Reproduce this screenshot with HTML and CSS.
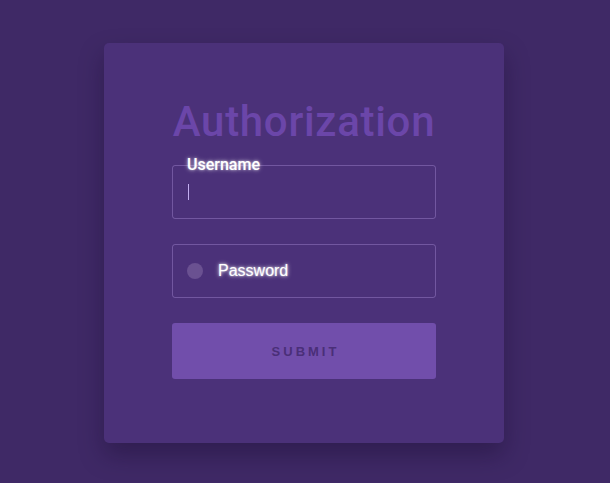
FILE: index.html
```html
<!DOCTYPE html>
<html lang="en">
<head>
<meta charset="utf-8">
<title>Authorization</title>
<link rel="stylesheet" href="styles.css">
</head>
<body>
<main class="card">
  <h1 class="title">Authorization</h1>
  <div class="field">
    <span class="label">Username</span>
    <span class="caret"></span>
  </div>
  <div class="field field-password">
    <span class="dot"></span>
    <span class="placeholder">Password</span>
  </div>
  <button class="submit" type="button">Submit</button>
</main>
</body>
</html>
```
FILE: styles.css
```css
html, body {
  margin: 0;
  padding: 0;
  height: 100%;
}
body {
  background: #3f2966;
  font-family: Roboto, "Liberation Sans", sans-serif;
  display: flex;
  justify-content: center;
  align-items: flex-start;
}
.card {
  margin-top: 43px;
  margin-right: 2px;
  width: 400px;
  height: 400px;
  box-sizing: border-box;
  background: #4b3179;
  border-radius: 5px;
  box-shadow: 0 12px 24px rgba(20, 8, 40, 0.35);
  padding: 58px 68px 0;
  display: flex;
  flex-direction: column;
}
.title {
  margin: 0 0 22px;
  font-size: 42px;
  line-height: 42px;
  font-weight: 500;
  letter-spacing: 0.7px;
  color: #6b46a9;
  text-align: center;
}
.field {
  position: relative;
  height: 54px;
  box-sizing: border-box;
  border: 1px solid rgba(190, 160, 235, 0.35);
  border-radius: 3px;
  margin-bottom: 25px;
  display: flex;
  align-items: center;
  padding-left: 14px;
}
.label {
  position: absolute;
  left: 14px;
  top: -11px;
  font-family: Roboto, sans-serif;
  font-size: 16px;
  line-height: 20px;
  font-weight: 500;
  color: #ffffff;
  text-shadow: 0 0 4px rgba(255, 255, 255, 0.7), 0 0 2px rgba(255, 255, 255, 0.5);
}
.caret {
  display: block;
  width: 1px;
  height: 16px;
  margin-left: 1px;
  background: #c3aef0;
}
.dot {
  width: 16px;
  height: 16px;
  border-radius: 50%;
  background: #6a5191;
  margin-right: 15px;
}
.placeholder {
  font-family: "Liberation Sans", Arial, sans-serif;
  font-size: 16px;
  color: #ffffff;
  text-shadow: 0 0 4px rgba(255, 255, 255, 0.85), 0 0 2px rgba(255, 255, 255, 0.7);
}
.submit {
  height: 56px;
  border: none;
  border-radius: 3px;
  background: #714eab;
  color: #4a2f78;
  font-family: "Liberation Sans", Arial, sans-serif;
  font-size: 13px;
  font-weight: bold;
  letter-spacing: 3px;
  text-transform: uppercase;
  padding: 0 0 0 3px;
  cursor: pointer;
}
```
